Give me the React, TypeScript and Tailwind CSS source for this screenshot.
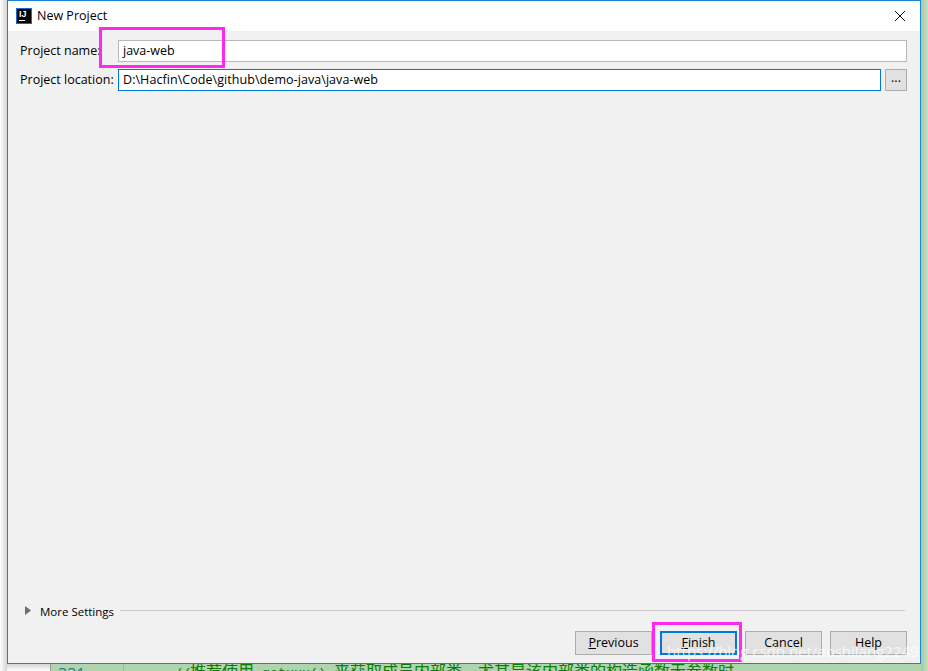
import React from 'react';

const uiFont = "font-['Open_Sans','Noto_Sans',sans-serif]";

const DialogButton: React.FC<{ label: React.ReactNode; primary?: boolean }> = ({ label, primary }) => (
  <button
    className={`h-[24px] w-[77px] flex items-center justify-center text-[12.5px] text-black bg-[#e1e1e1] border ${
      primary ? 'border-2 border-[#0078d7]' : 'border-[#adadad]'
    }`}
  >
    {label}
  </button>
);

const IdeaLogo = () => (
  <div className="w-4 h-4 border border-[#0a6fd0] bg-black flex flex-col items-start pl-[2px] shrink-0">
    <span className="text-[9px] leading-[9px] mt-[1px] font-bold text-white font-['Liberation_Sans',sans-serif]">IJ</span>
    <span className="w-[6px] h-[1px] bg-white mt-[1px]" />
  </div>
);

export default function App() {
  return (
    <div className={`relative w-[928px] h-[671px] overflow-hidden bg-white ${uiFont}`}>
      {/* window behind the dialog */}
      <div className="absolute left-[50px] top-[664px] w-[878px] h-[7px] bg-[#b0d4ae] border-l border-[#9a9a9a]" />
      <div className="absolute left-[921px] top-0 w-[7px] h-[671px] bg-gradient-to-r from-[#a5c9a5] to-[#c4e0c2]" />
      <div className="absolute left-[123px] top-[664px] w-[1px] h-[7px] bg-[#a3b8a1]" />
      <div className="absolute left-[58px] top-[666px] text-[16px] leading-[16px] text-[#1a7f9a]">331</div>
      <div className="absolute left-[174px] top-[663px] whitespace-nowrap text-[16px] leading-[20px] text-[#0a7d0a] font-['Liberation_Mono','Noto_Sans_CJK_SC',monospace]">
        <span className="text-[13.33px]">//</span>推荐使用<span className="text-[13.33px]"> getxxx() </span>来获取成员内部类，尤其是该内部类的构造函数无参数时
      </div>
      <div className="absolute left-0 top-0 w-[7px] h-[671px] bg-gradient-to-r from-white to-[#d4d4d4]" />
      <div className="absolute left-[7px] top-[664px] w-[43px] h-[7px] bg-gradient-to-b from-[#d4d4d4] to-white" />

      {/* dialog */}
      <div className="relative ml-[7px] w-[914px] h-[664px] flex flex-col border border-[#1883d7] bg-[#f1f1f1] text-[12.5px] text-black">
        <div className="h-[30px] bg-white flex items-center pl-[8px] pr-[14px] shrink-0">
          <IdeaLogo />
          <span className="ml-[5px] text-[12.5px]">New Project</span>
          <svg className="ml-auto" width="12" height="12" viewBox="0 0 12 12" fill="none" stroke="#111" strokeWidth="1">
            <path d="M1 1l10 10M11 1L1 11" />
          </svg>
        </div>

        <div className="flex-1 flex flex-col pl-[12px] pr-[13px]">
          <div className="flex items-center h-[22px] mt-[9px]">
            <span className="w-[98px] shrink-0">Project name:</span>
            <div className="flex-1 h-[22px] border border-[#b8b8b8] bg-white flex items-center pl-[4px]">java-web</div>
          </div>
          <div className="flex items-center h-[22px] mt-[7px]">
            <span className="w-[98px] shrink-0">Project location:</span>
            <div className="flex-1 h-[22px] border border-[#0078d7] bg-white flex items-center pl-[4px] tracking-[0.06px]">
              D:\Hacfin\Code\github\demo-java\java-web
            </div>
            <div className="w-[22px] h-[22px] ml-[4px] border border-[#adadad] bg-[#e1e1e1] flex items-center justify-center pb-[3px] leading-none">
              ...
            </div>
          </div>

          <div className="flex items-center mt-auto mb-[12px] pl-[5px] pr-[2px]">
            <svg width="6" height="9" viewBox="0 0 6 9" className="shrink-0">
              <path d="M0 0l6 4.5L0 9z" fill="#6e6e6e" />
            </svg>
            <span className="ml-[9px] text-[11.5px] translate-y-[1px]">More Settings</span>
            <div className="flex-1 ml-[6px] h-[1px] bg-[#cdcdcd]" />
          </div>
          <div className="flex justify-end gap-[8px] mb-[8px]">
            <DialogButton label={<><u>P</u>revious</>} />
            <DialogButton label={<><u>F</u>inish</>} primary />
            <DialogButton label="Cancel" />
            <DialogButton label="Help" />
          </div>
        </div>
      </div>

      {/* annotations drawn on top of the screenshot */}
      <div className="absolute left-[99px] top-[27px] w-[126px] h-[41px] border-[3px] border-[#ff28f0]" />
      <div className="absolute left-[652px] top-[622px] w-[90px] h-[40px] border-[3px] border-[#ff28f0]" />
      <div className="absolute left-[667px] top-[639px] text-[15px] leading-[24px] whitespace-nowrap text-white/75">
        https://blog.csdn.net/aoshilang2249
      </div>
    </div>
  );
}
